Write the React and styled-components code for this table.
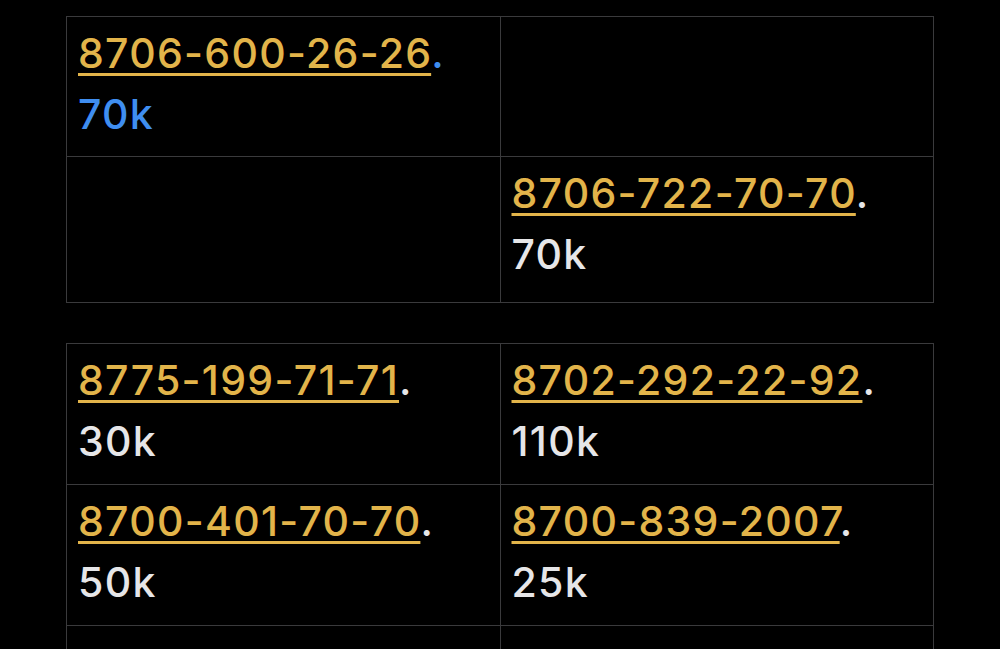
import React from "react";
import styled, { createGlobalStyle } from "styled-components";

const Global = createGlobalStyle`
  html, body { margin: 0; padding: 0; background: #000; }
  body { font-family: Inter, "Noto Sans", sans-serif; }
`;

const Page = styled.div`
  display: flex;
  flex-direction: column;
  gap: 40px;
  padding: 16px 66px 0;
  background: #000;
  min-height: 649px;
  box-sizing: border-box;
`;

const Table = styled.table`
  width: 100%;
  border-collapse: collapse;
  table-layout: fixed;
`;

const Row = styled.tr`
  height: ${(p) => p.$h || 141}px;
`;

const Cell = styled.td`
  border: 1px solid #3a3a3c;
  padding: 6px 11px;
  vertical-align: top;
  font-size: 41px;
  font-weight: 500;
  letter-spacing: 1.3px;
  line-height: 61px;
  color: ${(p) => (p.$blue ? "#3f8ef0" : "#e6e6e8")};
`;

const Phone = styled.a`
  color: #e2b44a;
  text-decoration: underline;
  text-decoration-thickness: 3px;
  text-underline-offset: 5px;
`;

function Entry({ phone, price, blue }) {
  return (
    <Cell $blue={blue}>
      <Phone href="#">{phone}</Phone>.
      <br />
      {price}
    </Cell>
  );
}

const Empty = () => <Cell />;

export default function App() {
  return (
    <>
      <Global />
      <Page>
        <Table>
          <tbody>
            <Row $h={140}>
              <Entry phone="8706-600-26-26" price="70k" blue />
              <Empty />
            </Row>
            <Row $h={146}>
              <Empty />
              <Entry phone="8706-722-70-70" price="70k" />
            </Row>
          </tbody>
        </Table>
        <Table>
          <tbody>
            <Row>
              <Entry phone="8775-199-71-71" price="30k" />
              <Entry phone="8702-292-22-92" price="110k" />
            </Row>
            <Row>
              <Entry phone="8700-401-70-70" price="50k" />
              <Entry phone="8700-839-2007" price="25k" />
            </Row>
            <Row>
              <Empty />
              <Empty />
            </Row>
          </tbody>
        </Table>
      </Page>
    </>
  );
}
